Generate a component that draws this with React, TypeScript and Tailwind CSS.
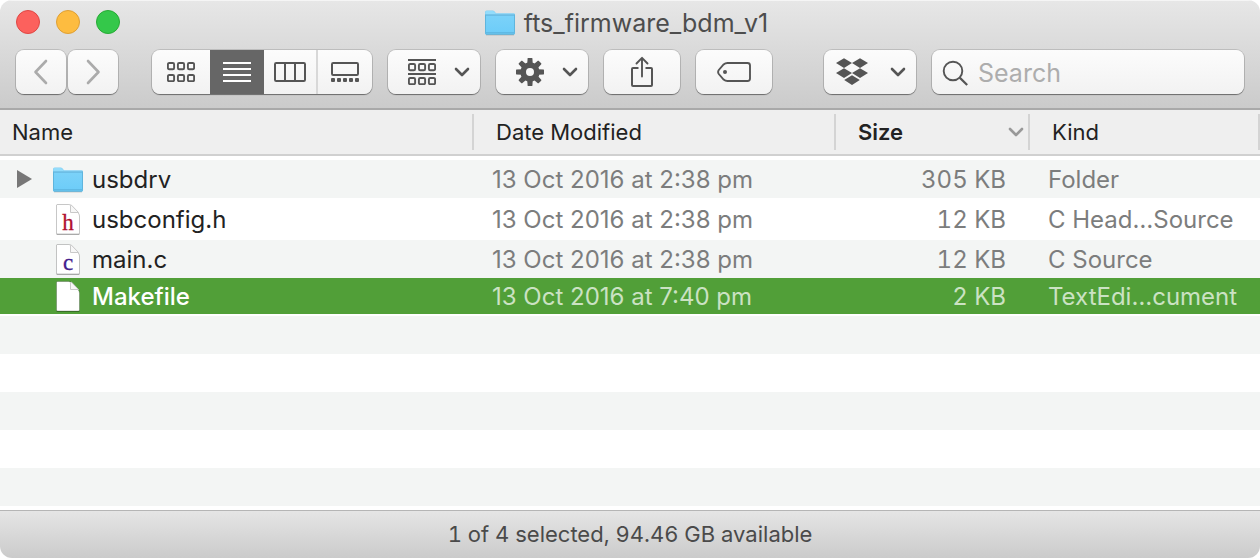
import type { ReactNode } from "react";

type FileKind = "folder" | "header" | "source" | "blank";

interface FileRow {
  name: string;
  icon: FileKind;
  modified: string;
  size: string;
  kind: string;
  height: string;
  selected?: boolean;
}

const files: FileRow[] = [
  { name: "usbdrv", icon: "folder", modified: "13 Oct 2016 at 2:38 pm", size: "305 KB", kind: "Folder", height: "h-[38px]" },
  { name: "usbconfig.h", icon: "header", modified: "13 Oct 2016 at 2:38 pm", size: "12 KB", kind: "C Head…Source", height: "h-[42px]" },
  { name: "main.c", icon: "source", modified: "13 Oct 2016 at 2:38 pm", size: "12 KB", kind: "C Source", height: "h-[38px]" },
  { name: "Makefile", icon: "blank", modified: "13 Oct 2016 at 7:40 pm", size: "2 KB", kind: "TextEdi…cument", height: "h-9", selected: true },
];

const buttonLook =
  "flex h-11 items-center bg-linear-to-b from-[#fcfcfc] to-[#f2f2f2] text-[#555555]";
const raised =
  "rounded-lg shadow-[0_0_0_1px_rgba(0,0,0,0.13),0_1px_1px_rgba(0,0,0,0.4)]";

function FolderIcon() {
  return (
    <svg width="32" height="27" viewBox="0 0 32 27" aria-hidden="true">
      <defs>
        <linearGradient id="folderFront" x1="0" y1="0" x2="0" y2="1">
          <stop offset="0" stopColor="#7bd2f9" />
          <stop offset="1" stopColor="#6cccf8" />
        </linearGradient>
      </defs>
      <path d="M1 3.2Q1 1.5 2.6 1.5H8.6Q9.8 1.5 10.6 2.4L12 4.2H29.6Q31 4.2 31 5.6V24Q31 25.5 29.6 25.5H2.4Q1 25.5 1 24Z" fill="#86d0f3" />
      <path d="M1.5 3.4Q1.5 2 2.8 2H8.4Q9.6 2 10.4 3L11.8 4.8H29.4Q30.4 4.8 30.5 5.9H1.5Z" fill="#93dcfb" />
      <path d="M1 6.5H31V24Q31 25.5 29.6 25.5H2.4Q1 25.5 1 24Z" fill="url(#folderFront)" />
      <path d="M1 6H31" stroke="#58acd6" strokeWidth="1" />
      <path d="M1.5 6V23.8Q1.5 25 2.6 25H29.4Q30.5 25 30.5 23.8V6" fill="none" stroke="#5fb5dd" strokeWidth="1" />
      <path d="M2 23.5H30" stroke="#5fb9e4" strokeWidth="1" />
      <path d="M2 26H30" stroke="#000" strokeOpacity="0.15" />
    </svg>
  );
}

function DocumentIcon({ letter, color }: { letter?: string; color?: string }) {
  return (
    <svg width="26" height="33" viewBox="0 0 26 33" aria-hidden="true">
      <path d="M1.5 31.2H24.5" stroke="#000" strokeOpacity="0.25" strokeWidth="1.4" />
      <path d="M1.5 2.5Q1.5 1.5 2.5 1.5H13.5Q15.5 1.5 17 3L22.5 9Q24.5 11 24.5 13V30Q24.5 31 23.5 31H2.5Q1.5 31 1.5 30Z" fill="#fff" stroke="#000" strokeOpacity="0.22" />
      <path d="M15.5 2.5V9.5H23.5L16.5 2.2Z" fill="#f7f7f7" stroke="#c9c9c9" />
      {letter && (
        <text x="13" y="27" textAnchor="middle" fontFamily="'Liberation Serif', serif" fontSize="23" fill={color} stroke={color} strokeWidth="0.3">
          {letter}
        </text>
      )}
    </svg>
  );
}

function FileIcon({ kind }: { kind: FileKind }) {
  if (kind === "folder") return <FolderIcon />;
  if (kind === "header") return <DocumentIcon letter="h" color="#b01030" />;
  if (kind === "source") return <DocumentIcon letter="c" color="#43208c" />;
  return <DocumentIcon />;
}

function Chevron() {
  return (
    <svg width="16" height="10" viewBox="0 0 16 10" fill="none" stroke="currentColor" strokeWidth="2.6" strokeLinecap="round" strokeLinejoin="round" aria-hidden="true">
      <path d="M2 2L8 8L14 2" />
    </svg>
  );
}

function SmallSquares({ y }: { y: number }) {
  return (
    <>
      {[1, 11, 21].map((x) => (
        <rect key={x} x={x - 0.1} y={y} width="6.2" height="6.2" rx="1.3" />
      ))}
    </>
  );
}

function GridIcon() {
  return (
    <svg width="28" height="20" viewBox="0 0 28 20" fill="none" stroke="currentColor" strokeWidth="1.9" aria-hidden="true">
      <SmallSquares y={1} />
      <SmallSquares y={13} />
    </svg>
  );
}

function ListIcon() {
  return (
    <svg width="28" height="20" viewBox="0 0 28 20" stroke="currentColor" strokeWidth="2" aria-hidden="true">
      <path d="M0 1H28M0 7H28M0 13H28M0 19H28" />
    </svg>
  );
}

function ColumnsIcon() {
  return (
    <svg width="32" height="20" viewBox="0 0 32 20" fill="none" stroke="currentColor" strokeWidth="2" aria-hidden="true">
      <rect x="1" y="1" width="30" height="18" rx="1.2" />
      <path d="M11 1V19M21 1V19" />
    </svg>
  );
}

function GalleryIcon() {
  return (
    <svg width="28" height="20" viewBox="0 0 28 20" aria-hidden="true">
      <rect x="1" y="1" width="26" height="12" rx="1.2" fill="none" stroke="currentColor" strokeWidth="2" />
      {[0, 6, 12, 18, 24].map((x) => (
        <rect key={x} x={x} y="16" width="4" height="4" rx="1" fill="currentColor" />
      ))}
    </svg>
  );
}

function GroupIcon() {
  return (
    <svg width="28" height="26" viewBox="0 0 28 26" fill="none" stroke="currentColor" strokeWidth="1.9" aria-hidden="true">
      <path d="M0 1H28M0 15H28" />
      <SmallSquares y={5} />
      <SmallSquares y={19} />
    </svg>
  );
}

function GearIcon() {
  return (
    <svg width="28" height="28" viewBox="-14 -14 28 28" fill="currentColor" aria-hidden="true">
      {[0, 45, 90, 135, 180, 225, 270, 315].map((angle) => (
        <path key={angle} d="M-2.8 -8L-2.4 -13.5Q-2.3 -14 -1.8 -14H1.8Q2.3 -14 2.4 -13.5L2.8 -8Z" transform={`rotate(${angle})`} />
      ))}
      <path fillRule="evenodd" d="M0 -9.7A9.7 9.7 0 1 1 0 9.7A9.7 9.7 0 1 1 0 -9.7ZM0 -4A4 4 0 1 0 0 4A4 4 0 1 0 0 -4Z" />
    </svg>
  );
}

function ShareIcon() {
  return (
    <svg width="24" height="32" viewBox="0 0 24 32" fill="none" stroke="currentColor" strokeWidth="2" strokeLinejoin="round" aria-hidden="true">
      <path d="M8.5 12H3Q2 12 2 13V29Q2 30 3 30H21Q22 30 22 29V13Q22 12 21 12H15.5" />
      <path d="M12 20.5V2M6.5 7.5L12 1.8L17.5 7.5" strokeWidth="1.9" strokeLinecap="round" />
    </svg>
  );
}

function TagIcon() {
  return (
    <svg width="34" height="20" viewBox="0 0 34 20" aria-hidden="true">
      <path d="M10.5 1H30.5Q33 1 33 3.5V16.5Q33 19 30.5 19H10.5Q8.3 19 6.6 17.5L1.8 12Q0.4 10 1.8 8L6.6 2.5Q8.3 1 10.5 1Z" fill="none" stroke="currentColor" strokeWidth="1.9" />
      <circle cx="8" cy="10" r="2" fill="currentColor" />
    </svg>
  );
}

function DropboxIcon() {
  return (
    <svg width="32" height="28" viewBox="0 0 32 28" fill="currentColor" aria-hidden="true">
      <path d="M8 0.2L16 5.1L8 10L0 5.1ZM24 0.2L32 5.1L24 10L16 5.1ZM8 10.2L16 15.1L8 20L0 15.1ZM24 10.2L32 15.1L24 20L16 15.1ZM16 17.2L23.8 22.1L16 27L8.2 22.1Z" />
    </svg>
  );
}

function ArrowIcon({ d }: { d: string }) {
  return (
    <svg width="16" height="26" viewBox="0 0 16 26" fill="none" stroke="currentColor" strokeWidth="2.6" strokeLinecap="round" strokeLinejoin="round" aria-hidden="true">
      <path d={d} />
    </svg>
  );
}

function ToolButton({ label, className, children }: { label: string; className: string; children: ReactNode }) {
  return (
    <button type="button" aria-label={label} className={`${buttonLook} ${className}`}>
      {children}
    </button>
  );
}

function TitleBar() {
  return (
    <header className="border-b-2 border-[#a9a9a9] bg-linear-to-b from-[#e7e7e7] to-[#cbcbcb] shadow-[inset_0_1px_0_#f5f5f5]">
      <div className="grid h-11 grid-cols-[1fr_auto_1fr] items-center pr-6 pl-4">
        <div className="flex gap-4">
          <button type="button" aria-label="Close" className="size-6 rounded-full border border-[#df4744] bg-[#fc615d]" />
          <button type="button" aria-label="Minimise" className="size-6 rounded-full border border-[#de9f34] bg-[#fdbc40]" />
          <button type="button" aria-label="Zoom" className="size-6 rounded-full border border-[#27aa35] bg-[#34c84a]" />
        </div>
        <h1 className="flex items-center gap-2 text-[25px] leading-8 text-[#4d4d4d]">
          <FolderIcon />
          <span className="pt-0.5">fts_firmware_bdm_v1</span>
        </h1>
      </div>
      <div className="flex gap-4 px-4 pt-1.5 pb-3.5">
        <div className="mr-[18px] flex gap-0.5">
          <ToolButton label="Back" className={`w-[50px] justify-center text-[#ababab] ${raised}`}>
            <ArrowIcon d="M13 2L2.5 13L13 24" />
          </ToolButton>
          <ToolButton label="Forward" className={`w-[50px] justify-center text-[#ababab] ${raised}`}>
            <ArrowIcon d="M3 2L13.5 13L3 24" />
          </ToolButton>
        </div>
        <div className={`flex overflow-hidden ${raised}`}>
          <ToolButton label="Icon view" className="w-[58px] justify-center">
            <GridIcon />
          </ToolButton>
          <button type="button" aria-label="List view" aria-pressed="true" className="flex h-11 w-[54px] items-center justify-center bg-[#666666] text-white">
            <ListIcon />
          </button>
          <ToolButton label="Column view" className="w-[54px] justify-center border-r-2 border-[#d8d8d8]">
            <ColumnsIcon />
          </ToolButton>
          <ToolButton label="Gallery view" className="w-[54px] justify-center">
            <GalleryIcon />
          </ToolButton>
        </div>
        <ToolButton label="Group items" className={`w-[92px] justify-between pr-2.5 pl-5 ${raised}`}>
          <GroupIcon />
          <Chevron />
        </ToolButton>
        <ToolButton label="Actions" className={`w-[92px] justify-between pr-2.5 pl-5 ${raised}`}>
          <GearIcon />
          <Chevron />
        </ToolButton>
        <ToolButton label="Share" className={`w-[76px] justify-center ${raised}`}>
          <ShareIcon />
        </ToolButton>
        <ToolButton label="Edit tags" className={`mr-9 w-[76px] justify-center ${raised}`}>
          <TagIcon />
        </ToolButton>
        <ToolButton label="Dropbox" className={`w-[92px] justify-between pr-2.5 pl-3 ${raised}`}>
          <DropboxIcon />
          <Chevron />
        </ToolButton>
        <label className={`${buttonLook} min-w-0 flex-1 gap-2 pl-2.5 ${raised}`}>
          <svg width="28" height="28" viewBox="0 0 28 28" fill="none" stroke="currentColor" strokeWidth="1.9" aria-hidden="true" className="shrink-0">
            <circle cx="11" cy="13" r="9.3" />
            <path d="M17.7 19.6L25.2 27" strokeWidth="2.2" />
          </svg>
          <input type="search" aria-label="Search" placeholder="Search" className="h-full w-full min-w-0 bg-transparent pt-0.5 text-[25px] text-[#333333] outline-none placeholder:text-[#adadad]" />
        </label>
      </div>
    </header>
  );
}

function HeaderCell({ children, className }: { children: ReactNode; className: string }) {
  return (
    <th scope="col" className="border-b-2 border-[#d0d0d0] bg-[#efefef] p-0 font-normal">
      <div className={`my-1 flex h-9 items-center border-r-2 border-[#d4d4d4] ${className}`}>{children}</div>
    </th>
  );
}

function FileTable() {
  return (
    <table className="w-full table-fixed border-separate border-spacing-0 text-left">
      <colgroup>
        <col />
        <col className="w-[362px]" />
        <col className="w-[194px]" />
        <col className="w-[230px]" />
      </colgroup>
      <thead className="text-[22px] leading-7 text-[#222222]">
        <tr>
          <HeaderCell className="pl-3">Name</HeaderCell>
          <HeaderCell className="pl-[22px]">Date Modified</HeaderCell>
          <HeaderCell className="justify-between pr-1 pl-[22px] font-semibold">
            Size
            <span className="text-[#999999]">
              <Chevron />
            </span>
          </HeaderCell>
          <HeaderCell className="pl-[22px]">Kind</HeaderCell>
        </tr>
        <tr aria-hidden="true">
          <td colSpan={4} className="h-1 p-0" />
        </tr>
      </thead>
      <tbody className="text-[24px] leading-7 whitespace-nowrap">
        {files.map((file) => (
          <tr
            key={file.name}
            aria-selected={file.selected}
            className={`${file.height} ${file.selected ? "bg-[#519f38] text-[#cbe2c3]" : "text-[#7c7d7d] odd:bg-[#f3f5f4]"}`}
          >
            <td className="p-0">
              <div className={`flex items-center pl-4 ${file.selected ? "font-medium text-white" : "text-[#222222]"}`}>
                <span className="mr-5 flex w-4">
                  {file.icon === "folder" && (
                    <button type="button" aria-label={`Expand ${file.name}`} className="text-[#777777]">
                      <svg width="16" height="18" viewBox="0 0 16 18" fill="currentColor" aria-hidden="true" className="block">
                        <path d="M1 0L16 9L1 18Z" />
                      </svg>
                    </button>
                  )}
                </span>
                <span className="mr-2 flex w-8 justify-center">
                  <FileIcon kind={file.icon} />
                </span>
                <span className="pt-0.5">{file.name}</span>
              </div>
            </td>
            <td className="p-0 pt-0.5 pl-[18px]">{file.modified}</td>
            <td className="p-0 pt-0.5 pr-6 text-right tabular-nums">{file.size}</td>
            <td className="p-0 pt-0.5 pl-[18px]">{file.kind}</td>
          </tr>
        ))}
      </tbody>
    </table>
  );
}

export default function App() {
  return (
    <div className="min-h-screen bg-white font-['Inter','Liberation_Sans',sans-serif]">
      <main className="flex min-h-screen flex-col overflow-hidden rounded-xl bg-white">
        <TitleBar />
        <FileTable />
        <div aria-hidden="true" className="flex-1 pt-0.5 pb-1">
          {[0, 1, 2, 3, 4].map((row) => (
            <div key={row} className="h-[38px] odd:bg-[#f3f5f4]" />
          ))}
        </div>
        <footer className="flex h-12 items-center justify-center border-t border-[#b5b5b5] bg-linear-to-b from-[#e5e5e5] to-[#cbcbcb] text-[22px] text-[#4a4a4a] tabular-nums">
          1 of 4 selected, 94.46 GB available
        </footer>
      </main>
    </div>
  );
}
